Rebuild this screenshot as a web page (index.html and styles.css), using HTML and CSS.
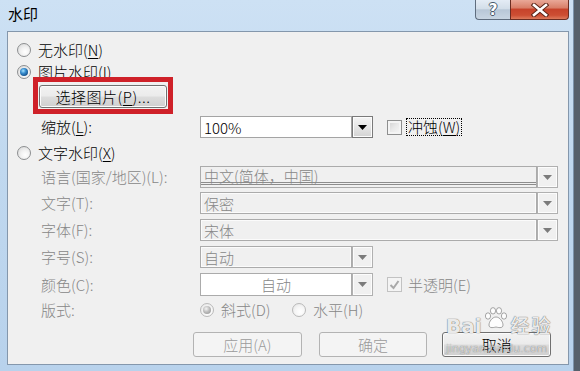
FILE: index.html
```html
<!DOCTYPE html>
<html lang="zh-CN">
<head>
  <meta charset="UTF-8" />
  <title>水印</title>
  <link rel="stylesheet" href="styles.css">
</head>
<body>
  <div class="window">
    <div class="titlebar">
      <span class="title">水印</span>
      <div class="caption">
        <div class="cap help"><span class="q">?</span></div>
        <div class="cap close">
          <svg width="18" height="14" viewBox="0 0 18 14">
            <path d="M3 2L15 12M15 2L3 12" stroke="#5a2418" stroke-width="4.5" stroke-linecap="square"/>
            <path d="M3 2L15 12M15 2L3 12" stroke="#fff" stroke-width="2.6" stroke-linecap="square"/>
          </svg>
        </div>
      </div>
    </div>

    <div class="client">
      <div class="row r-none">
        <span class="radio"></span>
        <span class="opt">无水印(<u>N</u>)</span>
      </div>
      <div class="row r-pic">
        <span class="radio"><span class="dot"></span></span>
        <span class="opt">图片水印(<u>I</u>)</span>
      </div>
      <div class="row r-pick">
        <button class="btn pick">选择图片(<u>P</u>)...</button>
      </div>
      <div class="row r-scale">
        <span class="lbl">缩放(<u>L</u>):</span>
        <div class="combo short">
          <span class="field white">100%</span>
          <span class="drop on"><svg width="9" height="5"><path d="M0 0h9L4.5 5z" fill="#000"/></svg></span>
        </div>
        <span class="check"></span>
        <span class="focus">冲蚀(<u>W</u>)</span>
      </div>
      <div class="row r-text">
        <span class="radio"></span>
        <span class="opt">文字水印(<u>X</u>)</span>
      </div>
      <div class="row r-lang dis">
        <span class="lbl">语言(国家/地区)(L):</span>
        <div class="combo long">
          <span class="field lined">中文(简体，中国)</span>
          <span class="drop"><svg width="9" height="5"><path d="M0 0h9L4.5 5z" fill="#7b7b7b"/></svg></span>
        </div>
      </div>
      <div class="row r-word dis">
        <span class="lbl">文字(T):</span>
        <div class="combo long">
          <span class="field">保密</span>
          <span class="drop"><svg width="9" height="5"><path d="M0 0h9L4.5 5z" fill="#7b7b7b"/></svg></span>
        </div>
      </div>
      <div class="row r-font dis">
        <span class="lbl">字体(F):</span>
        <div class="combo long">
          <span class="field">宋体</span>
          <span class="drop"><svg width="9" height="5"><path d="M0 0h9L4.5 5z" fill="#7b7b7b"/></svg></span>
        </div>
      </div>
      <div class="row r-size dis">
        <span class="lbl">字号(S):</span>
        <div class="combo short">
          <span class="field">自动</span>
          <span class="drop"><svg width="9" height="5"><path d="M0 0h9L4.5 5z" fill="#7b7b7b"/></svg></span>
        </div>
      </div>
      <div class="row r-color dis">
        <span class="lbl">颜色(C):</span>
        <div class="combo short">
          <span class="field white center">自动</span>
          <span class="drop"><svg width="9" height="5"><path d="M0 0h9L4.5 5z" fill="#7b7b7b"/></svg></span>
        </div>
        <span class="check dis-check">
          <svg width="11" height="10" viewBox="0 0 11 10"><path d="M1.5 5l3 3 5-7" fill="none" stroke="#a9a9a9" stroke-width="2"/></svg>
        </span>
        <span class="opt-chk">半透明(E)</span>
      </div>
      <div class="row r-layout dis">
        <span class="lbl">版式:</span>
        <span class="radio off"><span class="dot gray"></span></span>
        <span class="opt slant">斜式(D)</span>
        <span class="radio off"></span>
        <span class="opt">水平(H)</span>
      </div>
      <div class="row r-btns">
        <button class="btn wide" disabled>应用(A)</button>
        <button class="btn wide" disabled>确定</button>
        <button class="btn wide">取消</button>
      </div>
    </div>

    <div class="red-mark"></div>

    <div class="bd-mark">
      <div class="bd-top">
        <span class="bd-bai">Bai</span>
        <svg class="paw" width="24" height="22" viewBox="0 0 24 22">
          <g fill="rgba(255,255,255,0.85)" stroke="rgba(110,110,110,0.6)" stroke-width="1">
            <ellipse cx="4" cy="9" rx="2.6" ry="3.2"/>
            <ellipse cx="9" cy="3.8" rx="2.6" ry="3.2"/>
            <ellipse cx="15" cy="3.8" rx="2.6" ry="3.2"/>
            <ellipse cx="20" cy="9" rx="2.6" ry="3.2"/>
            <path d="M12 10c-4 0-7 5-7 8 0 3 3 3 7 2 4 1 7 1 7-2 0-3-3-8-7-8z"/>
          </g>
        </svg>
        <span class="bd-jy">经验</span>
      </div>
      <div class="bd-url">jingyan.baidu.com</div>
    </div>
  </div>
</body>
</html>
```

FILE: styles.css
```css
* {
  box-sizing: border-box;
}

body {
  margin: 0;
  background: #56606b;
  font-family: "Noto Sans CJK SC", "Noto Sans", sans-serif;
  font-size: 15px;
  font-weight: 300;
  color: #000;
}

u {
  text-decoration: underline;
  text-underline-offset: 2px;
}

.window {
  position: relative;
  width: 574px;
  height: 371px;
  background: linear-gradient(180deg, #cde1f4 0%, #c0d8ef 45%, #b8d2ec 100%);
  border-right: 1px solid #7c93ab;
}

/* title bar */
.titlebar {
  display: flex;
  height: 31px;
}

.title {
  padding: 5px 0 0 8px;
  line-height: 18px;
  font-weight: 400;
}

.caption {
  display: flex;
  height: 20px;
  margin-left: auto;
  margin-right: 4px;
}

.cap {
  display: flex;
  align-items: center;
  justify-content: center;
  height: 20px;
  border: 1px solid #5f6d7e;
  border-top: none;
}

.help {
  width: 35px;
  border-right: none;
  border-radius: 0 0 0 4px;
  background: linear-gradient(180deg, #e4ecf5 0%, #d3dee9 45%, #b8c7d7 52%, #c8d5e2 100%);
}

.help .q {
  color: #fff;
  font-family: "DejaVu Sans", sans-serif;
  font-weight: bold;
  font-size: 15px;
  line-height: 16px;
  text-shadow: 1px 0 #48586a, -1px 0 #48586a, 0 1px #48586a, 0 -1px #48586a;
}

.close {
  width: 59px;
  border-color: #6b2d22;
  border-radius: 0 0 4px 0;
  background: linear-gradient(180deg, #e9a898 0%, #d9806a 40%, #c7432b 50%, #cd4e33 80%, #de7a5c 100%);
}

/* client area */
.client {
  display: flex;
  flex-direction: column;
  margin-left: 7px;
  width: 562px;
  height: 334px;
  background: #f0f0f0;
  border: 1px solid #8497ac;
}

.row {
  display: flex;
  align-items: center;
  flex-shrink: 0;
}

.r-none { margin-top: 8px; height: 20px; padding-left: 9px; }
.r-pic { margin-top: 2px; height: 20px; padding-left: 9px; }
.r-pick { margin-top: 3px; height: 23px; padding-left: 31px; }
.r-scale { margin-top: 8px; height: 22px; }
.r-text { margin-top: 5px; height: 20px; padding-left: 9px; }
.r-lang { margin-top: 3px; height: 22px; }
.r-word { margin-top: 4px; height: 22px; }
.r-font { margin-top: 5px; height: 22px; }
.r-size { margin-top: 5px; height: 22px; }
.r-color { margin-top: 5px; height: 23px; }
.r-layout { margin-top: 4px; height: 20px; }
.r-btns { margin-top: 12px; height: 25px; padding-left: 185px; }

.dis {
  color: #878787;
}

.opt {
  margin-left: 7px;
  line-height: 20px;
  white-space: nowrap;
}

.lbl {
  width: 192px;
  padding-left: 33px;
  white-space: nowrap;
  line-height: 20px;
}

/* radio buttons */
.radio {
  display: flex;
  align-items: center;
  justify-content: center;
  width: 14px;
  height: 14px;
  flex-shrink: 0;
  border-radius: 50%;
  border: 1px solid #8c8e90;
  background: radial-gradient(circle at 60% 65%, #ffffff 0%, #f2f2f2 40%, #d4d4d4 100%);
}

.radio.off {
  border-color: #b9b9b9;
  background: radial-gradient(circle at 60% 65%, #ffffff 0%, #f6f6f6 45%, #e2e2e2 100%);
}

.dot {
  width: 8px;
  height: 8px;
  border-radius: 50%;
  background: radial-gradient(circle at 40% 35%, #a8e4ff 0%, #3a8fd0 35%, #0e4a85 80%, #0b3a6a 100%);
}

.dot.gray {
  background: radial-gradient(circle at 40% 35%, #f4f4f4 0%, #bdbdbd 45%, #8f8f8f 100%);
}

.slant {
  width: 71px;
}

/* buttons */
.btn {
  height: 100%;
  padding: 0;
  font: inherit;
  color: #000;
  border: 1px solid #707070;
  border-radius: 3px;
  background: linear-gradient(180deg, #f2f2f2 0%, #ebebeb 48%, #dddddd 52%, #cfcfcf 100%);
  box-shadow: inset 0 0 0 1px #fbfbfb;
}

.btn:disabled {
  color: #9a9a9a;
  border-color: #b3b3b3;
  background: #f4f4f4;
  box-shadow: none;
}

.pick {
  width: 128px;
  height: 23px;
  letter-spacing: 0.5px;
}

.wide {
  width: 111px;
  margin-right: 17px;
}

.wide + .wide + .wide {
  margin-left: -2px;
}

/* combo boxes */
.combo {
  display: flex;
  height: 100%;
}

.combo.short { width: 173px; }
.combo.long { width: 358px; }

.field {
  flex: 1;
  display: flex;
  align-items: center;
  padding-left: 3px;
  border: 1px solid #ababab;
  background: #f0f0f0;
  box-shadow: inset 0 0 0 1px #fbfbfb;
  white-space: nowrap;
  overflow: hidden;
}

.field.white {
  background: #fff;
  box-shadow: none;
}

.r-scale .field {
  border-color: #a4a4a4;
}

.field.center {
  justify-content: center;
  padding-left: 0;
}

.field.lined {
  align-items: flex-start;
  line-height: 17px;
  box-shadow: inset 0 -2px 0 #f0f0f0, inset 0 -3px 0 #8c8c8c, inset 0 -4px 0 #f0f0f0, inset 0 -5px 0 #8c8c8c;
}

.drop {
  display: flex;
  align-items: center;
  justify-content: center;
  width: 21px;
  border: 1px solid #b0b0b0;
  background: #f0f0f0;
  box-shadow: inset 0 0 0 1px #fcfcfc;
}

.drop.on {
  border-color: #7a7a7a;
  background: linear-gradient(180deg, #f4f4f4 0%, #e6e6e6 50%, #d3d3d3 100%);
}

/* check boxes */
.check {
  display: flex;
  align-items: center;
  justify-content: center;
  width: 15px;
  height: 15px;
  margin-left: 14px;
  border: 1px solid #8e8f8f;
  background: linear-gradient(135deg, #cfcfcf 0%, #e9e9e9 50%, #f8f8f8 100%);
  box-shadow: inset 0 0 0 2px #f4f4f4;
}

.dis-check {
  border-color: #c2c2c2;
  background: #f4f4f4;
  box-shadow: none;
}

.focus {
  margin-left: 4px;
  padding: 0 2px;
  height: 18px;
  line-height: 17px;
  outline: 1px dotted #000;
  outline-offset: -1px;
  white-space: nowrap;
}

.opt-chk {
  margin-left: 6px;
  white-space: nowrap;
}

/* annotation box drawn over the dialog */
.red-mark {
  position: absolute;
  left: 33px;
  top: 77px;
  width: 140px;
  height: 37px;
  border: 5px solid #cf2129;
}

/* baidu watermark overlay */
.bd-mark {
  position: absolute;
  left: 446px;
  top: 304px;
  color: rgba(255, 255, 255, 0.9);
  text-shadow: 0 0 1px rgba(80, 80, 80, 0.9), 0 0 1px rgba(80, 80, 80, 0.6);
  font-family: "DejaVu Sans", sans-serif;
}

.bd-top {
  display: flex;
  align-items: flex-end;
  height: 33px;
}

.bd-bai {
  font-size: 20px;
  font-weight: bold;
  line-height: 22px;
}

.paw {
  margin: 0 3px 8px 2px;
}

.bd-jy {
  font-family: "Noto Sans CJK SC", sans-serif;
  font-size: 19px;
  font-weight: 500;
  line-height: 24px;
  letter-spacing: 2px;
}

.bd-url {
  margin-top: 5px;
  font-size: 11px;
  line-height: 13px;
}
```
